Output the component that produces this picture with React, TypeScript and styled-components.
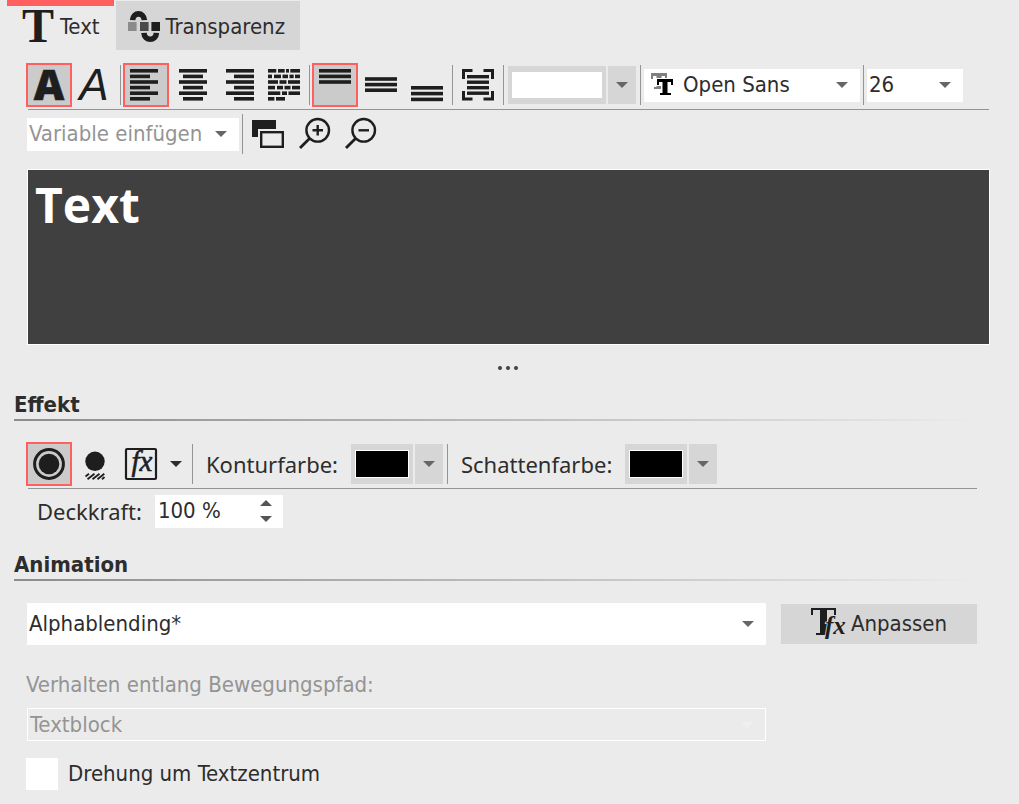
import React from "react";
import styled, { createGlobalStyle } from "styled-components";

const ink = "#1e1e1e";
const uiFont = `"DejaVu Sans Condensed", "DejaVu Sans", sans-serif`;
const labelFont = `"Noto Sans", "Open Sans", sans-serif`;

const Global = createGlobalStyle`
  *, *::before, *::after { box-sizing: border-box; }
  body { margin: 0; background: #ebebeb; }
  button, input, select, textarea { font: inherit; color: inherit; border: 0; border-radius: 0; margin: 0; padding: 0; }
`;

const Page = styled.main`
  min-height: 100vh;
  background: #ebebeb;
  color: #2d2d2d;
  font: 22px/32px ${uiFont};
`;

const Tabs = styled.div`
  display: flex;
  gap: 2px;
  height: 50px;
  padding-left: 7px;
`;

const Tab = styled.button<{ $active?: boolean }>`
  display: flex;
  align-items: center;
  gap: 6px;
  padding: ${(p) => (p.$active ? "0 14px 2px 15px" : "2px 15px 0 12px")};
  margin-top: ${(p) => (p.$active ? 0 : 1)}px;
  border-top: ${(p) => (p.$active ? "6px solid #ff5f5f" : "0")};
  background: ${(p) => (p.$active ? "transparent" : "#d6d6d6")};
`;

const Toolbar = styled.div`
  display: flex;
  align-items: center;
  height: 44px;
`;

const ToolArea = styled.div`
  padding: 13px 29px 0 26px;
`;

const Rule = styled.hr`
  height: 1px;
  margin: 2px 1px 2px 2px;
  border: 0;
  background: #949494;
`;

const Sep = styled.span`
  flex: none;
  width: 1px;
  height: 40px;
  margin: 0 2px;
  background: #949494;
`;

const Tool = styled.button<{ $on?: boolean }>`
  display: grid;
  place-items: center;
  flex: none;
  width: 46px;
  height: 44px;
  border: 2px solid ${(p) => (p.$on ? "#ff5f5f" : "transparent")};
  background: ${(p) => (p.$on ? "#cbcbcb" : "transparent")};
`;

const MenuButton = styled.button`
  display: grid;
  place-items: center;
  width: 24px;
  height: 40px;
  margin-right: 2px;
  background: transparent;
`;

const Icon = styled.svg`
  display: block;
  flex: none;
  overflow: visible;
`;

const ColorGroup = styled.div<{ $h: number }>`
  display: flex;
  gap: 2px;
  height: ${(p) => p.$h}px;
  margin: 0 2px;
`;

const ColorButton = styled.button<{ $w: number; $color: string }>`
  display: flex;
  width: ${(p) => p.$w}px;
  padding: 6px 4px;
  background: #d6d6d6;

  &::after {
    content: "";
    flex: 1;
    border: 1px solid #fff;
    background: ${(p) => p.$color};
  }
`;

const ColorDrop = styled.button`
  display: grid;
  place-items: center;
  width: 28px;
  background: #d6d6d6;
`;

const Combo = styled.div<{ $w?: number; $h?: number; $off?: boolean }>`
  display: grid;
  align-items: center;
  flex: ${(p) => (p.$w ? "none" : "1")};
  width: ${(p) => (p.$w ? p.$w + "px" : "auto")};
  height: ${(p) => p.$h ?? 33}px;
  margin: 0 1px;
  border: ${(p) => (p.$off ? "1px solid #fff" : "0")};
  background: ${(p) => (p.$off ? "transparent" : "#fff")};

  > * { grid-area: 1 / 1; }
  > svg { pointer-events: none; }
`;

const Select = styled.select<{ $pad?: number; $muted?: boolean }>`
  appearance: none;
  width: 100%;
  height: 100%;
  padding: 0 30px 0 ${(p) => p.$pad ?? 2}px;
  background: transparent;
  color: ${(p) => (p.$muted ? "#949494" : "#2d2d2d")};
  opacity: 1;
`;

const ArrowEnd = styled(Icon)`
  justify-self: end;
  margin-right: 12px;
`;

const FontMark = styled(Icon)`
  margin-left: 7px;
`;

const Editor = styled.textarea`
  display: block;
  width: calc(100% - 56px);
  height: 176px;
  margin: 13px 29px 0 27px;
  padding: 2px 7px;
  border: 1px solid #fff;
  outline: 0;
  resize: none;
  background: #404040;
  color: #fff;
  font: 700 48px/66px "Open Sans", sans-serif;
`;

const Grip = styled.div`
  display: flex;
  justify-content: center;
  gap: 4px;
  padding: 21px 3px 20px 0;

  i {
    width: 4px;
    height: 4px;
    border-radius: 2px;
    background: #404040;
  }
`;

const Section = styled.section`
  padding: 0 42px 17px 14px;

  &:last-child { padding-bottom: 14px; }
`;

const Heading = styled.h2`
  margin: 0;
  padding-top: 1px;
  border-bottom: 2px solid;
  border-image: linear-gradient(90deg, #8c8c8c, #ebebeb) 1;
  font-size: 22px;
  line-height: 28px;
  font-weight: 700;
`;

const Body = styled.div<{ $top: number }>`
  padding: ${(p) => p.$top}px 0 0 12px;
`;

const BodyRule = styled(Rule)`
  margin: 2px 0 0 2px;
`;

const Label = styled.label`
  padding: 0 11px;
  font-family: ${labelFont};
`;

const Spin = styled.div`
  display: flex;
  width: 128px;
  height: 33px;
  margin-left: 2px;
  background: #fff;
`;

const SpinInput = styled.input`
  flex: 1;
  min-width: 0;
  padding-left: 3px;
  background: transparent;
`;

const SpinButtons = styled.div`
  display: grid;
  width: 34px;

  button {
    display: grid;
    place-items: center;
    background: transparent;
  }
`;

const AnimationRow = styled.div`
  display: flex;
  align-items: center;
  gap: 14px;
`;

const Adjust = styled.button`
  display: flex;
  align-items: center;
  justify-content: center;
  gap: 8px;
  width: 196px;
  height: 40px;
  background: #d6d6d6;
`;

const PathLabel = styled.label`
  display: block;
  padding: 24px 0 7px;
  color: #949494;
`;

const PathRow = styled.div`
  display: flex;
  padding-right: 210px;
`;

const Check = styled.label`
  display: flex;
  align-items: center;
  gap: 10px;
  width: max-content;
  margin-top: 17px;

  input {
    appearance: none;
    width: 32px;
    height: 32px;
    background: #fff;
  }
`;

const SerifText = styled.text`
  font-family: "Liberation Serif", serif;
`;

const down = "M0 0H12L6 6Z";

function Arrow({ color = "#666" }: { color?: string }) {
  return (
    <Icon width="12" height="6" viewBox="0 0 12 6"><path d={down} fill={color} /></Icon>
  );
}

function EndArrow({ color = "#666" }: { color?: string }) {
  return (
    <ArrowEnd width="12" height="6" viewBox="0 0 12 6"><path d={down} fill={color} /></ArrowEnd>
  );
}

function Glyph({ children }: { children: React.ReactNode }) {
  return (
    <Icon width="32" height="32" viewBox="0 0 32 32" fill={ink} aria-hidden="true">{children}</Icon>
  );
}

type Bar = [x: number, y: number, w: number];

function Bars({ bars }: { bars: Bar[] }) {
  return (
    <Glyph>
      {bars.map(([x, y, w]) => <rect key={`${x}-${y}`} x={x} y={y} width={w} height="3.6" />)}
    </Glyph>
  );
}

const rowY = [0, 5.6, 11.2, 16.8, 22.4, 28];
const alignLeft = rowY.map((y, i): Bar => [0, y, i % 2 ? 20 : 28]);
const alignCenter = rowY.map((y, i): Bar => (i % 2 ? [7, y, 20] : [3, y, 28]));
const alignRight = rowY.map((y, i): Bar => (i % 2 ? [12, y, 20] : [4, y, 28]));
const blockParts: [number, number][][] = [
  [[0, 8.3], [10, 6.7], [18, 3], [22.3, 9.7]],
  [[0, 4], [6, 7], [14.5, 5.5], [21.5, 4.2], [27, 5]],
  [[0, 10], [11.5, 7], [20, 12]],
  [[0, 7], [9, 6], [16.5, 6], [24, 8]],
  [[0, 12.3], [14, 5], [20.5, 11.5]],
  [[0, 6.4], [8, 9]],
];
const alignBlock = blockParts.flatMap((parts, i) => parts.map(([x, w]): Bar => [x, rowY[i], w]));
const stack = (ys: number[]) => ys.map((y): Bar => [0, y, 32]);

function Zoom({ plus }: { plus?: boolean }) {
  return (
    <Glyph>
      <g fill="none" stroke={ink} strokeWidth="2.4">
        <circle cx="19.7" cy="12.3" r="11.3" />
        <path d="M11.8 20.2L2 30" strokeWidth="2.8" />
        <path d={plus ? "M14.5 12.3H25M19.7 7V17.6" : "M14.5 12.3H25"} />
      </g>
    </Glyph>
  );
}

function FontPiece({ x, y, color }: { x: number; y: number; color: string }) {
  return (
    <g fill={color}>
      <rect x={x} y={y} width="16" height="3" />
      <rect x={x} y={y} width="2" height="6" />
      <rect x={x + 14} y={y} width="2" height="6" />
      <rect x={x + 5.5} y={y} width="5" height="16" />
      <rect x={x + 3} y={y + 14} width="11" height="2" />
    </g>
  );
}

export default function App() {
  return (
    <Page>
      <Global />
      <Tabs role="tablist">
        <Tab $active role="tab" aria-selected="true">
          <Glyph><SerifText x="16" y="31" textAnchor="middle" fontSize="48" fontWeight="700">T</SerifText></Glyph>
          Text
        </Tab>
        <Tab role="tab" aria-selected="false">
          <Glyph>
            <rect x="0" y="11" width="8.6" height="9" fill="#8c8c8c" />
            <rect x="12" y="11" width="8.6" height="9" fill="#4a4a4a" />
            <rect x="23.4" y="11" width="8.6" height="9" />
            <path d="M4.6 9.2C5 0.8 16 0.8 16.4 9.2M16 21.8C16.4 30.4 28 30.4 28.4 21.8" fill="none" stroke={ink} strokeWidth="5.6" />
          </Glyph>
          Transparenz
        </Tab>
      </Tabs>

      <ToolArea>
        <Toolbar>
          <Tool $on aria-label="Fett">
            <Glyph><text x="16" y="31" textAnchor="middle" fontSize="42" fontWeight="800" fontFamily="Open Sans, sans-serif" stroke={ink} strokeWidth="0.6">A</text></Glyph>
          </Tool>
          <Tool aria-label="Kursiv">
            <Glyph><text x="15" y="31" textAnchor="middle" fontSize="44" fontStyle="italic" fontFamily="Liberation Sans, sans-serif">A</text></Glyph>
          </Tool>
          <Sep />
          <Tool $on aria-label="Linksbündig"><Bars bars={alignLeft} /></Tool>
          <Tool aria-label="Zentriert"><Bars bars={alignCenter} /></Tool>
          <Tool aria-label="Rechtsbündig"><Bars bars={alignRight} /></Tool>
          <Tool aria-label="Blocksatz"><Bars bars={alignBlock} /></Tool>
          <Sep />
          <Tool $on aria-label="Oben"><Bars bars={stack([0, 5.6, 11.2])} /></Tool>
          <Tool aria-label="Mitte"><Bars bars={stack([8.2, 13.8, 19.4])} /></Tool>
          <Tool aria-label="Unten"><Bars bars={stack([17, 22.8, 28.6])} /></Tool>
          <Sep />
          <Tool aria-label="Einpassen">
            <Glyph>
              <path d="M1.5 10V1.5H10.5M21.5 1.5H30.5V10M30.5 22V30H21.5M10.5 30H1.5V22" fill="none" stroke={ink} strokeWidth="3" />
              {[6, 11.5, 17, 22.5].map((y) => <rect key={y} x="5" y={y} width="22" height="3.4" />)}
            </Glyph>
          </Tool>
          <Sep />
          <ColorGroup $h={38}>
            <ColorButton $w={98} $color="#fff" aria-label="Textfarbe" />
            <ColorDrop aria-label="Textfarbe wählen"><Arrow /></ColorDrop>
          </ColorGroup>
          <Sep />
          <Combo $w={216}>
            <Select $pad={39} aria-label="Schriftart"><option>Open Sans</option></Select>
            <FontMark width="24" height="24" viewBox="0 0 24 24" aria-hidden="true">
              <FontPiece x={0} y={0} color="#808080" />
              <path d="M5 5H23V13H17V23H10V13H5Z" fill="#fff" />
              <FontPiece x={6} y={6} color="#000" />
            </FontMark>
            <EndArrow />
          </Combo>
          <Sep />
          <Combo $w={96}>
            <Select aria-label="Schriftgröße"><option>26</option></Select>
            <EndArrow />
          </Combo>
        </Toolbar>
        <Rule />
        <Toolbar>
          <Combo $w={212}>
            <Select $muted aria-label="Variable"><option>Variable einfügen</option></Select>
            <EndArrow />
          </Combo>
          <Sep />
          <Tool aria-label="Farben anzeigen">
            <Glyph>
              <rect x="0" y="2" width="24" height="17" />
              <rect x="6" y="11" width="20" height="9" fill="#ebebeb" />
              <rect x="9.2" y="14.2" width="21.6" height="14.6" fill="#ebebeb" stroke={ink} strokeWidth="2.4" />
            </Glyph>
          </Tool>
          <Tool aria-label="Vergrößern"><Zoom plus /></Tool>
          <Tool aria-label="Verkleinern"><Zoom /></Tool>
        </Toolbar>
      </ToolArea>

      <Editor aria-label="Textinhalt" defaultValue="Text" spellCheck={false} />
      <Grip><i /><i /><i /></Grip>

      <Section>
        <Heading>Effekt</Heading>
        <Body $top={21}>
          <Toolbar>
            <Tool $on aria-label="Kontur">
              <Glyph>
                <circle cx="16" cy="16" r="14.4" fill="none" stroke={ink} strokeWidth="3" />
                <circle cx="16" cy="16" r="10.3" />
              </Glyph>
            </Tool>
            <Tool aria-label="Schatten">
              <Glyph>
                <circle cx="16" cy="13.3" r="9.7" />
                <path d="M6.5 28.5L10 25.8M8.5 31.2L15.5 25.8M13.5 31.2L20.5 25.8M18.5 31.2L25.3 25.8M23 31.2L25.5 29" stroke={ink} strokeWidth="1.8" />
              </Glyph>
            </Tool>
            <Tool aria-label="Effekte">
              <Glyph>
                <rect x="1" y="1" width="30" height="30" rx="1" fill="none" stroke={ink} strokeWidth="2.2" />
                <SerifText x="17" y="23" textAnchor="middle" fontSize="29" fontStyle="italic" stroke={ink} strokeWidth="0.6">fx</SerifText>
              </Glyph>
            </Tool>
            <MenuButton aria-label="Effekt wählen"><Arrow color="#2d2d2d" /></MenuButton>
            <Sep />
            <Label htmlFor="outline-color">Konturfarbe:</Label>
            <ColorGroup $h={40}>
              <ColorButton $w={62} $color="#000" id="outline-color" />
              <ColorDrop aria-label="Konturfarbe wählen"><Arrow /></ColorDrop>
            </ColorGroup>
            <Sep />
            <Label htmlFor="shadow-color">Schattenfarbe:</Label>
            <ColorGroup $h={40}>
              <ColorButton $w={62} $color="#000" id="shadow-color" />
              <ColorDrop aria-label="Schattenfarbe wählen"><Arrow /></ColorDrop>
            </ColorGroup>
          </Toolbar>
          <BodyRule />
          <Toolbar>
            <Label htmlFor="opacity">Deckkraft:</Label>
            <Spin>
              <SpinInput id="opacity" defaultValue="100 %" />
              <SpinButtons>
                <button aria-label="Mehr"><Icon width="12" height="6" viewBox="0 0 12 6"><path d="M0 6H12L6 0Z" fill="#555" /></Icon></button>
                <button aria-label="Weniger"><Arrow color="#555" /></button>
              </SpinButtons>
            </Spin>
          </Toolbar>
        </Body>
      </Section>

      <Section>
        <Heading>Animation</Heading>
        <Body $top={22}>
          <AnimationRow>
            <Combo $h={42}>
              <Select aria-label="Animation"><option>Alphablending*</option></Select>
              <EndArrow />
            </Combo>
            <Adjust>
              <Glyph>
                <rect x="0" y="0" width="25" height="2" />
                <rect x="0" y="0" width="2" height="7" />
                <rect x="23" y="0" width="2" height="7" />
                <rect x="9" y="0" width="7" height="27" />
                <rect x="5" y="25" width="13" height="2" />
                <SerifText x="14" y="26" fontSize="25" fontStyle="italic" fontWeight="700" stroke="#d6d6d6" strokeWidth="1.6" paintOrder="stroke">fx</SerifText>
              </Glyph>
              Anpassen
            </Adjust>
          </AnimationRow>
          <PathLabel htmlFor="path-behaviour">Verhalten entlang Bewegungspfad:</PathLabel>
          <PathRow>
            <Combo $off>
              <Select id="path-behaviour" $muted disabled><option>Textblock</option></Select>
              <EndArrow color="#f0f0f0" />
            </Combo>
          </PathRow>
          <Check><input type="checkbox" />Drehung um Textzentrum</Check>
        </Body>
      </Section>
    </Page>
  );
}
